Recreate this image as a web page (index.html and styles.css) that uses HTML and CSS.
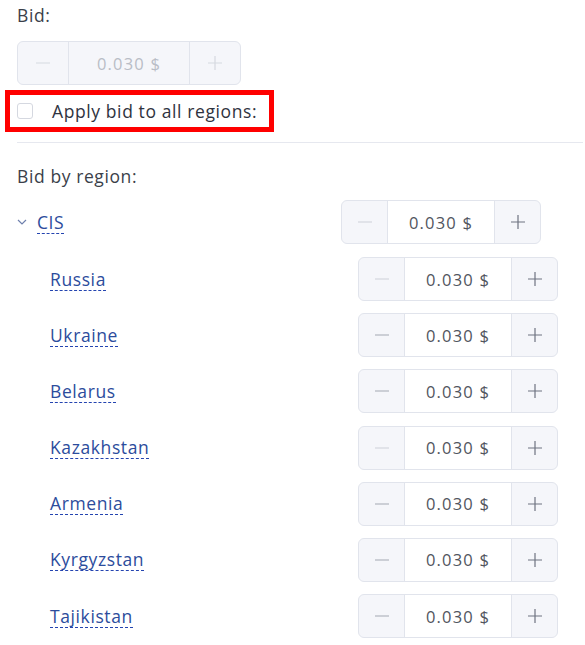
FILE: index.html
```html
<!DOCTYPE html>
<html lang="en">
<head>
    <meta charset="UTF-8">
    <meta name="viewport" content="width=device-width, initial-scale=1.0">
    <title>Bid</title>
    <link rel="stylesheet" href="styles.css">
</head>
<body>

    <div class="campo-label">Bid:</div>

    <div class="stepper stepper-geral desativado">
        <span class="botao menos"><svg width="16" height="16" viewBox="0 0 16 16"><line x1="1" y1="8" x2="15" y2="8"/></svg></span>
        <span class="valor">0.030 $</span>
        <span class="botao"><svg width="16" height="16" viewBox="0 0 16 16"><line x1="1" y1="8" x2="15" y2="8"/><line x1="8" y1="1" x2="8" y2="15"/></svg></span>
    </div>

    <label class="aplicar-todos">
        <span class="checkbox"></span>
        <span>Apply bid to all regions:</span>
    </label>

    <div class="separador"></div>

    <div class="campo-label label-regioes">Bid by region:</div>

    <div class="regiao-linha grupo">
        <span class="regiao-nome">
            <svg class="seta" width="10" height="6" viewBox="0 0 10 6"><polyline points="1,1 5,5 9,1"/></svg>
            <a class="link-regiao">CIS</a>
        </span>
        <div class="stepper">
            <span class="botao menos menos-off"><svg width="16" height="16" viewBox="0 0 16 16"><line x1="1" y1="8" x2="15" y2="8"/></svg></span>
            <span class="valor">0.030 $</span>
            <span class="botao"><svg width="16" height="16" viewBox="0 0 16 16"><line x1="1" y1="8" x2="15" y2="8"/><line x1="8" y1="1" x2="8" y2="15"/></svg></span>
        </div>
    </div>

    <div class="subregioes" id="subregioes"></div>

    <script>
        // Lista de países dentro do grupo CIS
        const paises = [
            { nome: 'Russia', menosOff: true },
            { nome: 'Ukraine', menosOff: false },
            { nome: 'Belarus', menosOff: false },
            { nome: 'Kazakhstan', menosOff: true },
            { nome: 'Armenia', menosOff: false },
            { nome: 'Kyrgyzstan', menosOff: false },
            { nome: 'Tajikistan', menosOff: false }
        ];

        const menos = '<svg width="16" height="16" viewBox="0 0 16 16"><line x1="1" y1="8" x2="15" y2="8"/></svg>';
        const mais = '<svg width="16" height="16" viewBox="0 0 16 16"><line x1="1" y1="8" x2="15" y2="8"/><line x1="8" y1="1" x2="8" y2="15"/></svg>';

        const lista = document.getElementById('subregioes');
        paises.forEach(pais => {
            const linha = document.createElement('div');
            linha.className = 'regiao-linha';
            linha.innerHTML =
                '<span class="regiao-nome"><a class="link-regiao">' + pais.nome + '</a></span>' +
                '<div class="stepper">' +
                    '<span class="botao menos' + (pais.menosOff ? ' menos-off' : '') + '">' + menos + '</span>' +
                    '<span class="valor">0.030 $</span>' +
                    '<span class="botao">' + mais + '</span>' +
                '</div>';
            lista.appendChild(linha);
        });
    </script>
</body>
</html>
```

FILE: styles.css
```css
body {
    margin: 0;
    padding: 0 0 0 17px;
    width: 568px;
    background-color: #fff;
    font-family: "Open Sans", "Liberation Sans", sans-serif;
    font-size: 17.5px;
    letter-spacing: 0.6px;
    color: #3b3f4a;
}
.campo-label {
    line-height: 20px;
    margin-top: 5px;
}
.stepper {
    display: flex;
    height: 42px;
    width: 198px;
    border: 1px solid #e1e4ec;
    border-radius: 6px;
    background-color: #f5f6fa;
    overflow: hidden;
}
.stepper .botao {
    width: 45px;
    display: flex;
    align-items: center;
    justify-content: center;
    stroke: #6e7380;
    stroke-width: 1.2;
}
.stepper .botao.menos {
    stroke: #a4a8b1;
}
.stepper .botao.menos-off {
    stroke: #cdd0d7;
}
.stepper .valor {
    flex: 1;
    display: flex;
    align-items: center;
    justify-content: center;
    background-color: #fff;
    border-left: 1px solid #e1e4ec;
    border-right: 1px solid #e1e4ec;
    color: #51555e;
    font-size: 16.5px;
    letter-spacing: 1.2px;
}
.stepper-geral {
    width: 222px;
    margin-top: 16px;
}
.stepper-geral .botao {
    width: 50px;
}
.desativado .botao,
.desativado .botao.menos {
    stroke: #d6d9df;
}
.desativado .valor {
    background-color: #f5f6fa;
    color: #b9bdc6;
}
.aplicar-todos {
    display: flex;
    align-items: center;
    gap: 19px;
    box-sizing: border-box;
    width: 269px;
    height: 42px;
    margin: 5px 0 0 -12px;
    padding-left: 7px;
    border: 5px solid #ff0000;
    color: #2f3340;
}
.checkbox {
    width: 14px;
    height: 14px;
    border: 1px solid #d5d8e0;
    border-radius: 3px;
    background-color: #fff;
}
.separador {
    height: 1px;
    margin-top: 10px;
    margin-right: 2px;
    background-color: #e6e8ef;
}
.label-regioes {
    margin-top: 23px;
}
.regiao-linha {
    display: flex;
    align-items: center;
    height: 44px;
}
.grupo {
    margin-top: 14px;
}
.regiao-nome {
    width: 324px;
    display: flex;
    align-items: center;
}
.seta {
    width: 10px;
    margin-right: 10px;
    fill: none;
    stroke: #6f80ad;
    stroke-width: 1.2;
}
.link-regiao {
    color: #2c4c9c;
    line-height: 22px;
    border-bottom: 1px dashed #2444b0;
}
.subregioes {
    display: flex;
    flex-direction: column;
    gap: 12.2px;
    margin-top: 13px;
    padding-left: 17px;
}
.subregioes .regiao-nome {
    padding-left: 16px;
    box-sizing: border-box;
    width: 324px;
}
```
